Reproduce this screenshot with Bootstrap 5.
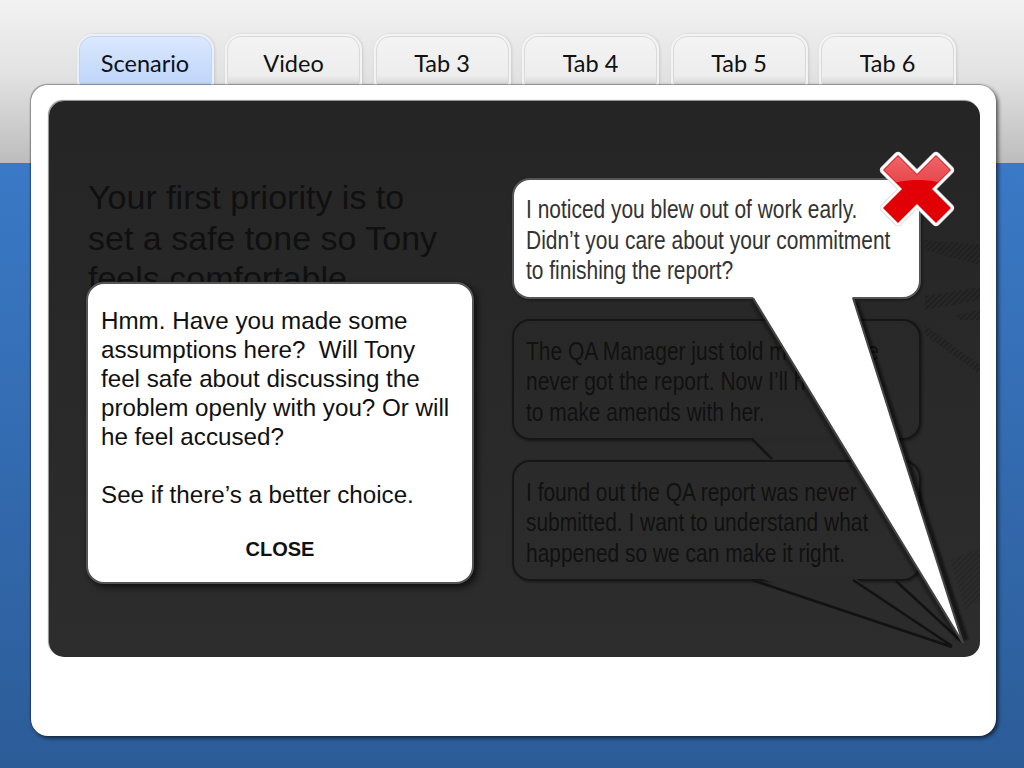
<!DOCTYPE html>
<html lang="en">
<head>
<meta charset="utf-8">
<title>Scenario</title>
<link rel="stylesheet" href="https://cdn.jsdelivr.net/npm/bootstrap@5.3.0/dist/css/bootstrap.min.css">
<style>
html,body{height:100%;margin:0;overflow:hidden}
.stage{position:relative;width:1024px;height:768px;overflow:hidden;background:linear-gradient(#f2f2f2 0,#e2e2e2 75px,#bcbcbc 163px,#3a79c6 163px,#2c5c98 768px);padding-top:34px}
.tabrow{padding-left:76.500px;gap:11.500px;height:51px;flex-wrap:nowrap}
.tabitem{width:137px;height:51px;border:3px solid #f3f3f3;border-bottom:0;outline:1px solid #d9d9d9;outline-offset:-3px;border-radius:16px 16px 0 0;background:linear-gradient(#f3f3f3,#ededed 80%,#d6d6d6);font:23.5px/52px Lato,"Noto Sans",sans-serif;color:#111;text-align:center;box-shadow:1px 0 3px rgba(0,0,0,.12)}
.tabitem.is-current{background:linear-gradient(#dbe8fd,#bed5fb);border-color:#e9f0fb;outline-color:#c4d4ea;color:#0d1020}
.sheet{width:965px;height:651px;margin-left:31px;background:#fff;border-radius:17px;padding:16px 16px 0 18px;box-shadow:2px 2px 4px rgba(0,0,0,.65),-1px -1px 1px rgba(0,0,0,.28);position:relative}
.darkpane{position:relative;height:556px;border-radius:15px;background:linear-gradient(#252525,#2d2d2d);box-shadow:-1px -1px 1px #8c8c8c;overflow:hidden}
.intro{width:400px;margin:76px 0 0 39px;font:34px/40.6px "Liberation Sans",Arial,sans-serif;color:#101010}
.bubbles{width:409px;gap:20px;position:absolute;left:463px;top:77px}
.bubble{height:121px;border:2.500px solid #161616;border-radius:18px;padding:14.500px 11.500px 0;font:25.300px/30.500px "Liberation Sans",sans-serif;color:#111;box-shadow:1px 1px 3px rgba(0,0,0,.45);white-space:nowrap}
.bubble.is-live{background:#fff;color:#333;border:2px solid #555;padding:14px 12px 0}
.narrowtext{display:block;transform:scaleX(.828);transform-origin:0 0}
.tails{position:absolute;left:0;top:0;width:931px;height:556px}
.popup{position:absolute;left:37px;top:181px;width:388px;height:302px;background:#fff;border:2px solid #555;border-radius:18px;padding:22px 13px 0;font:24.200px/29px "Liberation Sans",Arial,sans-serif;color:#111;box-shadow:3px 3px 7px rgba(0,0,0,.7);white-space:nowrap}
.closer{font-size:20px;font-weight:700;text-align:center;margin:28px 0 0 0;color:#111;line-height:24px}
.xmark{position:absolute;left:830px;top:50px;width:76px;height:76px}
</style>
</head>
<body>
<div class="stage">
  <div class="nav tabrow">
    <div class="tabitem is-current">Scenario</div>
    <div class="tabitem">Video</div>
    <div class="tabitem">Tab 3</div>
    <div class="tabitem">Tab 4</div>
    <div class="tabitem">Tab 5</div>
    <div class="tabitem">Tab 6</div>
  </div>
  <div class="sheet">
    <div class="darkpane">
      <div class="intro">Your first priority is to<br>set a safe tone so Tony<br>feels comfortable.</div>
      <div class="bubbles d-flex flex-column">
        <div class="bubble is-live"><span class="narrowtext">I noticed you blew out of work early.<br>Didn’t you care about your commitment<br>to finishing the report?</span></div>
        <div class="bubble"><span class="narrowtext">The QA Manager just told me that she<br>never got the report. Now I’ll have my<br>to make amends with her.</span></div>
        <div class="bubble"><span class="narrowtext">I found out the QA report was never<br>submitted. I want to understand what<br>happened so we can make it right.</span></div>
      </div>
      <svg class="tails" viewBox="49 101 931 556" aria-hidden="true">
        <defs>
          <pattern id="hatch" width="4" height="4" patternUnits="userSpaceOnUse" patternTransform="rotate(45)"><rect width="2" height="4" fill="#1a1a1a"/></pattern>
          <filter id="soft" x="-20%" y="-20%" width="140%" height="140%"><feGaussianBlur stdDeviation="1.300"/></filter>
        </defs>
        <g fill="url(#hatch)" opacity=".45">
          <polygon points="925,240 980,245 980,265 925,250"/>
          <polygon points="925,296 980,287 980,300 925,310"/>
          <polygon points="955,315 980,310 980,320 960,320"/>
          <polygon points="925,325 980,365 980,374 925,335"/>
          <polygon points="950,560 980,548 980,600 965,610" opacity=".5"/>
        </g>
        <rect x="754" y="436" width="110" height="8" fill="#292929"/>
        <path d="M752 439 772 459" stroke="#151515" stroke-width="2.500" fill="none"/>
        <polygon points="754,576 852,576 952,646" fill="#2b2b2b"/>
        <path d="M752 580 952 647M853 580 952 646M896 581 962 642" stroke="#121212" stroke-width="2.500" fill="none"/>
        <path d="M856 302 966 640" stroke="#000" stroke-opacity=".5" stroke-width="5" fill="none" filter="url(#soft)"/>
        <path d="M752 302 958 640" stroke="#000" stroke-opacity=".3" stroke-width="4" fill="none" filter="url(#soft)"/>
        <polygon points="752,296 852,296 963,643" fill="#fff"/>
        <path d="M753 298 963 643 853 298" fill="none" stroke="#454545" stroke-width="2"/>
      </svg>
      <div class="popup">Hmm. Have you made some<br>assumptions here?&nbsp; Will Tony<br>feel safe about discussing the<br>problem openly with you? Or will<br>he feel accused?<br><br>See if there’s a better choice.
        <div class="closer">CLOSE</div>
      </div>
      <svg class="xmark" viewBox="0 0 76 76" aria-hidden="true">
        <defs>
          <clipPath id="xclip"><path d="M19 5 38 24 57 5 71 19 52 38 71 57 57 71 38 52 19 71 5 57 24 38 5 19Z"/></clipPath>
          <linearGradient id="xgloss" x1="0" y1="0" x2="0" y2="1"><stop offset="0" stop-color="#fff" stop-opacity=".42"/><stop offset="1" stop-color="#fff" stop-opacity=".25"/></linearGradient>
        </defs>
        <path d="M19 5 38 24 57 5 71 19 52 38 71 57 57 71 38 52 19 71 5 57 24 38 5 19Z" fill="#d4d4d4" stroke="#d4d4d4" stroke-width="8.500" stroke-linejoin="round"/>
        <path d="M19 5 38 24 57 5 71 19 52 38 71 57 57 71 38 52 19 71 5 57 24 38 5 19Z" fill="#fff" stroke="#fff" stroke-width="7" stroke-linejoin="round"/>
        <path d="M19 5 38 24 57 5 71 19 52 38 71 57 57 71 38 52 19 71 5 57 24 38 5 19Z" fill="#e00006" stroke="#e00006" stroke-width="1.500" stroke-linejoin="round"/>
        <path d="M0 0H76V38C58 26 20 26 0 38Z" fill="url(#xgloss)" clip-path="url(#xclip)"/>
      </svg>
    </div>
  </div>
</div>
<script src="https://cdn.jsdelivr.net/npm/bootstrap@5.3.0/dist/js/bootstrap.bundle.min.js"></script>
</body>
</html>
